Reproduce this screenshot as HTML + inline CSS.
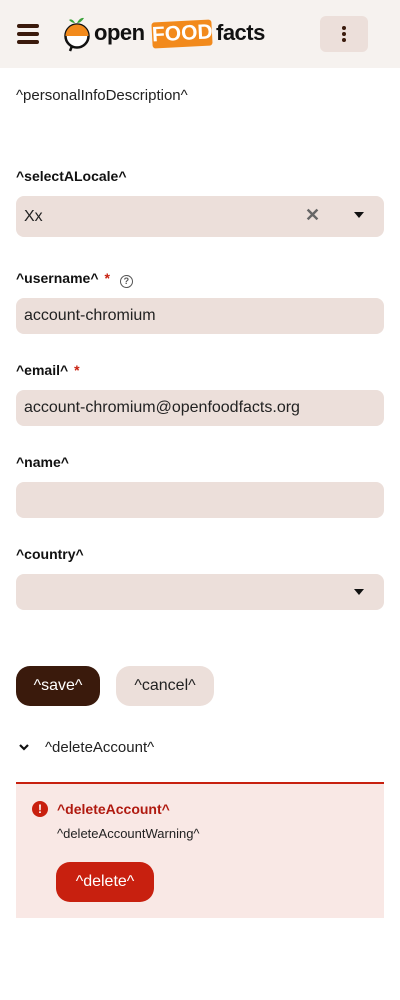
<!DOCTYPE html>
<html><head><meta charset="utf-8"><style>
*{box-sizing:border-box;margin:0;padding:0}
body{width:400px;height:1000px;background:#fff;font-family:"Liberation Sans",sans-serif;color:#222;position:relative;overflow:hidden}
.hdr{position:absolute;left:0;top:0;width:400px;height:68px;background:#f6f2ef}
.abs{position:absolute}
.lbl{position:absolute;left:16px;font-size:14px;font-weight:bold;color:#111}
.star{color:#c8200f;margin-left:6px}
.inp{position:absolute;left:16px;width:368px;background:#ecdfda;border-radius:8px;font-size:16px;color:#222;padding-left:8px;display:flex;align-items:center}
</style></head><body>
<div class="hdr">
  <div class="abs" style="left:17px;top:24px;width:22px;height:4px;background:#3a1a0c;border-radius:2px"></div>
  <div class="abs" style="left:17px;top:32px;width:22px;height:4px;background:#3a1a0c;border-radius:2px"></div>
  <div class="abs" style="left:17px;top:40px;width:22px;height:4px;background:#3a1a0c;border-radius:2px"></div>
  <svg class="abs" style="left:63px;top:16px" width="28" height="36" viewBox="0 0 28 36">
    <path d="M12 7 Q9 2 6 4 Q9 7 12 7Z M14 7 Q17 1 21 2 Q18 7 14 7Z" fill="#3aa33a"/>
    <circle cx="14" cy="20" r="11.5" fill="#fff" stroke="#111" stroke-width="2.5"/>
    <path d="M2.5 20 A11.5 11.5 0 0 1 25.5 20Z" fill="#f28a1c"/>
    <path d="M9 30 L7 35" stroke="#111" stroke-width="2.5"/>
  </svg>
  <div class="abs" style="left:94px;top:20px;font-size:22px;font-weight:bold;color:#111;letter-spacing:-0.5px">open</div>
  <div class="abs" style="left:152px;top:21px;width:60px;height:26px;background:#f28a1c;border-radius:3px;transform:rotate(-3deg);color:#fff;font-size:21px;font-weight:bold;text-align:center;line-height:26px">FOOD</div>
  <div class="abs" style="left:216px;top:20px;font-size:22px;font-weight:bold;color:#111;letter-spacing:-0.5px">facts</div>
  <div class="abs" style="left:320px;top:16px;width:48px;height:36px;background:#ecdfda;border-radius:6px">
    <div class="abs" style="left:22px;top:10px;width:4px;height:4px;border-radius:2px;background:#3a1a0c"></div>
    <div class="abs" style="left:22px;top:16px;width:4px;height:4px;border-radius:2px;background:#3a1a0c"></div>
    <div class="abs" style="left:22px;top:22px;width:4px;height:4px;border-radius:2px;background:#3a1a0c"></div>
  </div>
</div>
<div class="abs" style="left:16px;top:87px;font-size:15px;color:#222">^personalInfoDescription^</div>

<div class="lbl" style="top:168px">^selectALocale^</div>
<div class="inp" style="top:196px;height:41px">Xx
  <span class="abs" style="left:289px;top:9px;font-size:18px;color:#666;font-weight:bold">✕</span>
  <span class="abs" style="left:338px;top:16px;width:0;height:0;border-left:5px solid transparent;border-right:5px solid transparent;border-top:6px solid #111"></span>
</div>

<div class="lbl" style="top:270px">^username^<span class="star">*</span>
  <span style="display:inline-block;margin-left:6px;width:13px;height:13px;border:1.5px solid #555;border-radius:50%;font-size:9px;line-height:10px;text-align:center;color:#555;vertical-align:-1px">?</span></div>
<div class="inp" style="top:298px;height:36px">account-chromium</div>

<div class="lbl" style="top:362px">^email^<span class="star">*</span></div>
<div class="inp" style="top:390px;height:36px">account-chromium@openfoodfacts.org</div>

<div class="lbl" style="top:454px">^name^</div>
<div class="inp" style="top:482px;height:36px"></div>

<div class="lbl" style="top:546px">^country^</div>
<div class="inp" style="top:574px;height:36px">
  <span class="abs" style="left:338px;top:15px;width:0;height:0;border-left:5px solid transparent;border-right:5px solid transparent;border-top:6px solid #111"></span>
</div>

<div class="abs" style="left:16px;top:666px;width:84px;height:40px;border-radius:14px;background:#3a1a0c;color:#fff;font-size:16px;text-align:center;line-height:40px">^save^</div>
<div class="abs" style="left:116px;top:666px;width:98px;height:40px;border-radius:14px;background:#ecdfda;color:#222;font-size:16px;text-align:center;line-height:40px">^cancel^</div>

<svg class="abs" style="left:18px;top:743px" width="12" height="10" viewBox="0 0 12 10"><path d="M2 2 L6 6 L10 2" stroke="#111" stroke-width="2.2" fill="none"/></svg>
<div class="abs" style="left:45px;top:739px;font-size:15px;color:#222">^deleteAccount^</div>

<div class="abs" style="left:16px;top:782px;width:368px;height:136px;background:#f9e8e5;border-top:2px solid #c8200f"></div>
<div class="abs" style="left:32px;top:801px;width:16px;height:16px;border-radius:50%;background:#c8200f;color:#fff;font-size:12px;font-weight:bold;text-align:center;line-height:16px">!</div>
<div class="abs" style="left:57px;top:801px;font-size:14px;font-weight:bold;color:#b01a10">^deleteAccount^</div>
<div class="abs" style="left:57px;top:826px;font-size:13px;color:#222">^deleteAccountWarning^</div>
<div class="abs" style="left:56px;top:862px;width:98px;height:40px;border-radius:14px;background:#c8200f;color:#fff;font-size:16px;text-align:center;line-height:40px">^delete^</div>
</body></html>
